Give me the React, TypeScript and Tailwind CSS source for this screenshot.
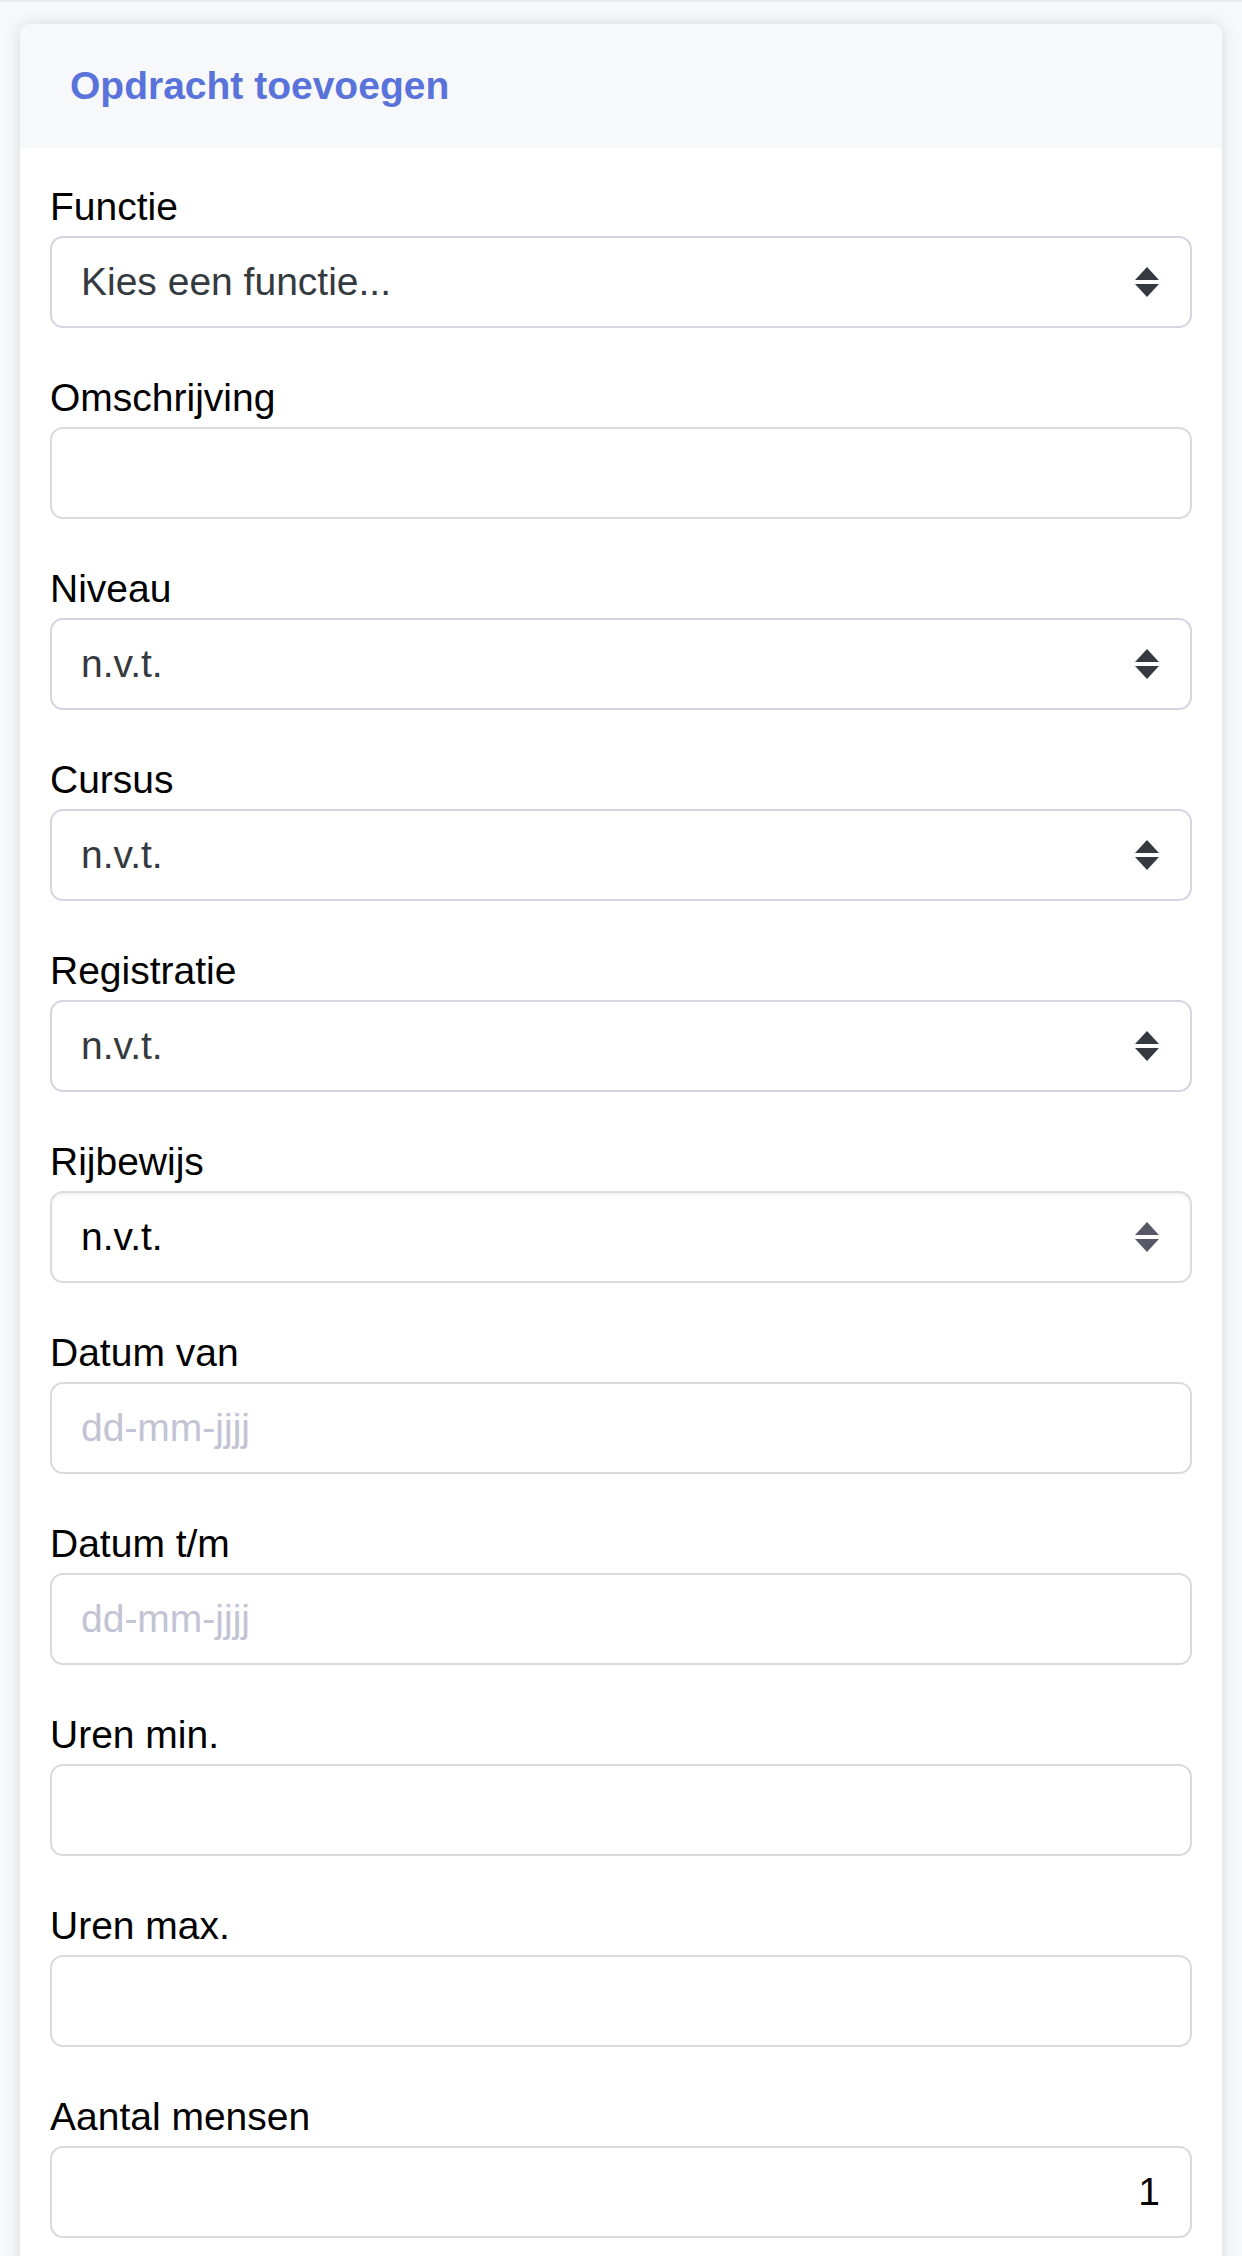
import React from "react";

type Field =
  | { kind: "select"; label: string; value: string; native?: boolean }
  | { kind: "input"; label: string; placeholder?: string; value?: string; right?: boolean };

const fields: Field[] = [
  { kind: "select", label: "Functie", value: "Kies een functie..." },
  { kind: "input", label: "Omschrijving" },
  { kind: "select", label: "Niveau", value: "n.v.t." },
  { kind: "select", label: "Cursus", value: "n.v.t." },
  { kind: "select", label: "Registratie", value: "n.v.t." },
  { kind: "select", label: "Rijbewijs", value: "n.v.t.", native: true },
  { kind: "input", label: "Datum van", placeholder: "dd-mm-jjjj" },
  { kind: "input", label: "Datum t/m", placeholder: "dd-mm-jjjj" },
  { kind: "input", label: "Uren min." },
  { kind: "input", label: "Uren max." },
  { kind: "input", label: "Aantal mensen", value: "1", right: true },
];

function Arrows({ color }: { color: string }) {
  return (
    <svg width="24" height="30" viewBox="0 0 24 30" aria-hidden="true">
      <polygon points="0,13 12,0 24,13" fill={color} />
      <polygon points="0,17 24,17 12,30" fill={color} />
    </svg>
  );
}

export default function App() {
  return (
    <div className="min-h-screen bg-[#f7f8fa] font-['Liberation_Sans',Arial,sans-serif]">
      <div className="h-[2px] bg-[#ebebee]" />
      <div className="px-[20px] pt-[22px]">
        <div className="overflow-hidden rounded-[10px] bg-white shadow-[0_0_16px_rgba(0,0,0,0.13)]">
          <div className="flex h-[124px] items-center bg-[#f7f8fa] pl-[50px]">
            <h1 className="text-[39px] font-bold leading-[44px] text-[#5a73db]">Opdracht toevoegen</h1>
          </div>
          <div className="px-[30px] pt-[37px]">
            {fields.map((f) => (
              <div key={f.label} className="mb-[48px]">
                <label className="block text-[39px] leading-[44px] text-black">{f.label}</label>
                {f.kind === "select" ? (
                  <div className="relative mt-[7px]">
                    <select
                      defaultValue={f.value}
                      className={
                        f.native
                          ? "block h-[92px] w-full appearance-none rounded-[13px] border-2 border-[#dcdcdc] bg-white pl-[29px] text-[39px] text-black shadow-[inset_0_2px_2px_rgba(0,0,0,0.05)] outline-none"
                          : "block h-[92px] w-full appearance-none rounded-[13px] border-2 border-[#d4d5e3] bg-white pl-[29px] text-[39px] text-[#343a40] outline-none"
                      }
                    >
                      <option>{f.value}</option>
                    </select>
                    <div className="pointer-events-none absolute right-[33px] top-1/2 -translate-y-1/2">
                      <Arrows color={f.native ? "#585868" : "#343a40"} />
                    </div>
                  </div>
                ) : (
                  <input
                    type="text"
                    readOnly
                    defaultValue={f.value}
                    placeholder={f.placeholder}
                    className={
                      "mt-[7px] block h-[92px] w-full rounded-[13px] border-2 border-[#dadada] bg-white pl-[29px] text-[39px] text-black outline-none placeholder:text-[#c2c3d4] " +
                      (f.right ? "pr-[30px] text-right" : "pr-[29px]")
                    }
                  />
                )}
              </div>
            ))}
          </div>
        </div>
      </div>
    </div>
  );
}
